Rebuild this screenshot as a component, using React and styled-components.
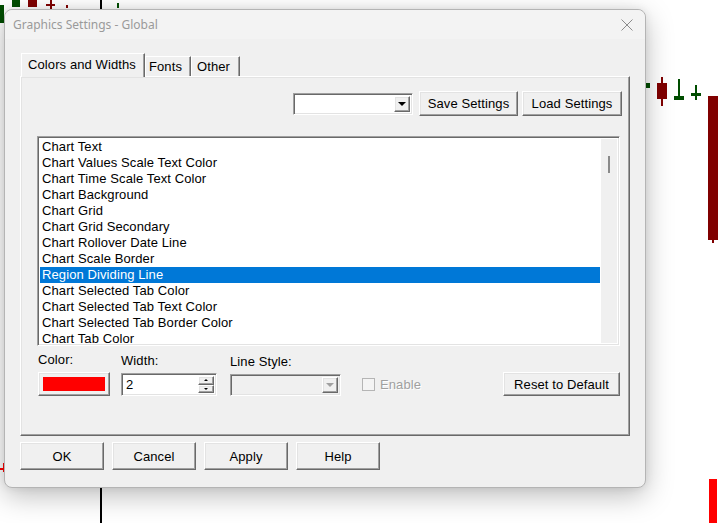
import React from "react";
import styled, { createGlobalStyle, css } from "styled-components";

const Global = createGlobalStyle`
  html, body { margin: 0; padding: 0; background: #fff; }
  body { font-family: "Liberation Sans", Arial, sans-serif; }
  * { box-sizing: border-box; }
`;

const raised = css`
  border: 1px solid;
  border-color: #ffffff #696969 #696969 #ffffff;
  box-shadow: inset -1px -1px 0 #a0a0a0, inset 1px 1px 0 #e3e3e3;
`;

const sunken = css`
  border: 1px solid;
  border-color: #a0a0a0 #ffffff #ffffff #a0a0a0;
  box-shadow: inset 1px 1px 0 #696969, inset -1px -1px 0 #e3e3e3;
`;

const Desktop = styled.div`
  position: relative;
  width: 723px;
  height: 523px;
  overflow: hidden;
  background: #ffffff;
`;

const Mark = styled.div`
  position: absolute;
  background: ${(p) => p.$c};
`;

const Window = styled.div`
  position: absolute;
  left: 4px;
  top: 9px;
  width: 642px;
  height: 479px;
  background: #f0f0f0;
  border: 1px solid #b4b4b4;
  border-radius: 8px;
  box-shadow: 0 8px 28px rgba(0, 0, 0, 0.26), 0 0 8px rgba(0, 0, 0, 0.08);
  display: flex;
  flex-direction: column;
  font-family: "Liberation Sans", Arial, sans-serif;
  font-size: 13px;
  letter-spacing: 0.1px;
  color: #000;
`;

const TitleBar = styled.div`
  height: 29px;
  display: flex;
  align-items: center;
  justify-content: space-between;
  padding: 0 12px 0 8px;
  background: #f3f3f3;
  border-radius: 8px 8px 0 0;
`;

const Title = styled.span`
  font-family: "Noto Sans", "Open Sans", sans-serif;
  font-size: 12px;
  letter-spacing: 0;
  color: #9a9a9a;
`;

const Body = styled.div`
  padding: 14px 0 0 15px;
  display: flex;
  flex-direction: column;
`;

const TabStrip = styled.div`
  display: flex;
  align-items: flex-end;
  height: 23px;
  padding-left: 1px;
  position: relative;
  z-index: 1;
`;

const Tab = styled.div`
  height: ${(p) => (p.$active ? "24px" : "20px")};
  width: ${(p) => p.$w}px;
  margin-bottom: ${(p) => (p.$active ? "-1px" : "0")};
  padding-left: ${(p) => p.$pl}px;
  padding-top: ${(p) => (p.$active ? "3px" : "2px")};
  background: #f0f0f0;
  border: 1px solid;
  border-bottom: none;
  border-color: #ffffff #696969 transparent #ffffff;
  box-shadow: inset -1px 0 0 #a0a0a0;
  line-height: 16px;
  white-space: nowrap;
`;

const Panel = styled.div`
  width: 610px;
  height: 360px;
  ${raised};
  display: flex;
  flex-direction: column;
  padding: 14px 7px 0 16px;
`;

const TopRow = styled.div`
  display: flex;
  justify-content: flex-end;
  align-items: center;
  height: 25px;
`;

const Combo = styled.div`
  width: ${(p) => p.$w}px;
  height: 22px;
  ${sunken};
  background: ${(p) => (p.$disabled ? "#f0f0f0" : "#ffffff")};
  display: flex;
  justify-content: flex-end;
  align-items: stretch;
  padding: 2px;
  margin-right: ${(p) => p.$mr || 0}px;
`;

const ComboButton = styled.div`
  width: 16px;
  ${raised};
  background: #f0f0f0;
  display: flex;
  align-items: center;
  justify-content: center;
`;

const Arrow = styled.div`
  width: 0;
  height: 0;
  border-left: ${(p) => p.$s}px solid transparent;
  border-right: ${(p) => p.$s}px solid transparent;
  ${(p) =>
    p.$up
      ? `border-bottom: ${p.$s}px solid ${p.$c};`
      : `border-top: ${p.$s}px solid ${p.$c};`}
`;

const Button = styled.button`
  ${raised};
  background: #f0f0f0;
  width: ${(p) => p.$w}px;
  height: ${(p) => p.$h || 25}px;
  margin-left: ${(p) => p.$ml || 0}px;
  padding: 0;
  font: inherit;
  color: #000;
  letter-spacing: 0.1px;
  line-height: 1;
`;

const ListBox = styled.div`
  margin-top: 20px;
  width: 583px;
  height: 210px;
  ${sunken};
  padding: 2px;
  background: #fff;
  display: flex;
`;

const Rows = styled.div`
  flex: 1;
  overflow: hidden;
  margin-right: 1px;
`;

const Row = styled.div`
  height: 16px;
  line-height: 16px;
  padding-left: 2px;
  white-space: nowrap;
  background: ${(p) => (p.$sel ? "#0078d7" : "transparent")};
  color: ${(p) => (p.$sel ? "#ffffff" : "#000")};
`;

const ScrollTrack = styled.div`
  width: 16px;
  background: #f0f0f0;
  padding: 17px 0 0 7px;
`;

const Thumb = styled.div`
  width: 2px;
  height: 17px;
  background: #8a8a8a;
`;

const Controls = styled.div`
  display: flex;
  align-items: flex-end;
  margin-top: 7px;
  width: 583px;
`;

const Field = styled.div`
  display: flex;
  flex-direction: column;
  gap: 5px;
  margin-left: ${(p) => p.$ml || 0}px;
`;

const Label = styled.div`
  height: 14px;
  line-height: 14px;
`;

const ColorSwatchButton = styled.div`
  width: 72px;
  height: 24px;
  ${raised};
  background: #f0f0f0;
  padding: 4px;
`;

const Swatch = styled.div`
  width: 100%;
  height: 100%;
  background: ${(p) => p.$c};
`;

const Spinner = styled.div`
  width: 96px;
  height: 23px;
  ${sunken};
  background: #fff;
  display: flex;
  padding: 2px;
`;

const SpinText = styled.div`
  flex: 1;
  padding-left: 2px;
  line-height: 17px;
`;

const SpinButtons = styled.div`
  width: 16px;
  display: flex;
  flex-direction: column;
`;

const SpinBtn = styled.div`
  flex: 1;
  ${raised};
  background: #f0f0f0;
  display: flex;
  align-items: center;
  justify-content: center;
`;

const Check = styled.label`
  display: flex;
  align-items: center;
  gap: 5px;
  margin-left: 21px;
  height: 23px;
  color: #a0a0a0;
  text-shadow: 1px 1px 0 #ffffff;
`;

const Box = styled.span`
  width: 13px;
  height: 13px;
  border: 1px solid #b5b5b5;
  background: #f4f4f4;
`;

const Spacer = styled.div`
  flex: 1;
`;

const Footer = styled.div`
  display: flex;
  gap: 8px;
  margin-top: 6px;
`;

const items = [
  "Chart Text",
  "Chart Values Scale Text Color",
  "Chart Time Scale Text Color",
  "Chart Background",
  "Chart Grid",
  "Chart Grid Secondary",
  "Chart Rollover Date Line",
  "Chart Scale Border",
  "Region Dividing Line",
  "Chart Selected Tab Color",
  "Chart Selected Tab Text Color",
  "Chart Selected Tab Border Color",
  "Chart Tab Color",
];

const G = "#004d00";
const R = "#800000";
const marks = [
  [0, 5, 4, 18, G],
  [12, 0, 8, 7, G],
  [28, 0, 9, 7, R],
  [50, 0, 2, 9, R],
  [46, 4, 9, 2, R],
  [66, 5, 2, 3, R],
  [100, 0, 2, 523, "#000"],
  [117, 3, 2, 5, G],
  [646, 83, 4, 5, G],
  [661, 77, 2, 29, R],
  [657, 83, 10, 16, R],
  [678, 79, 2, 19, G],
  [674, 96, 10, 4, G],
  [695, 85, 2, 15, G],
  [691, 93, 10, 3, G],
  [708, 96, 10, 144, R],
  [712, 240, 2, 3, R],
  [709, 479, 8, 44, "#ff0000"],
  [0, 468, 4, 2, "#ff0000"],
  [3, 463, 2, 9, "#ff0000"],
];

export default function App() {
  return (
    <Desktop>
      <Global />
      {marks.map(([x, y, w, h, c], i) => (
        <Mark key={i} $c={c} style={{ left: x, top: y, width: w, height: h }} />
      ))}
      <Window>
        <TitleBar>
          <Title>Graphics Settings - Global</Title>
          <svg width="12" height="12" viewBox="0 0 12 12">
            <path d="M0.5 0.5 L11.5 11.5 M11.5 0.5 L0.5 11.5" stroke="#8c8c8c" strokeWidth="1" />
          </svg>
        </TitleBar>
        <Body>
          <TabStrip>
            <Tab $active $w={124} $pl={6}>Colors and Widths</Tab>
            <Tab $w={46} $pl={3}>Fonts</Tab>
            <Tab $w={49} $pl={5}>Other</Tab>
          </TabStrip>
          <Panel>
            <TopRow>
              <Combo $w={120} $mr={6}>
                <ComboButton>
                  <Arrow $s={4} $c="#000" />
                </ComboButton>
              </Combo>
              <Button $w={99}>Save Settings</Button>
              <Button $w={100} $ml={4}>Load Settings</Button>
            </TopRow>
            <ListBox>
              <Rows>
                {items.map((t) => (
                  <Row key={t} $sel={t === "Region Dividing Line"}>{t}</Row>
                ))}
              </Rows>
              <ScrollTrack>
                <Thumb />
              </ScrollTrack>
            </ListBox>
            <Controls>
              <Field $ml={1}>
                <Label>Color:</Label>
                <ColorSwatchButton>
                  <Swatch $c="#ff0000" />
                </ColorSwatchButton>
              </Field>
              <Field $ml={11}>
                <Label>Width:</Label>
                <Spinner>
                  <SpinText>2</SpinText>
                  <SpinButtons>
                    <SpinBtn>
                      <Arrow $up $s={2} $c="#000" />
                    </SpinBtn>
                    <SpinBtn>
                      <Arrow $s={2} $c="#000" />
                    </SpinBtn>
                  </SpinButtons>
                </Spinner>
              </Field>
              <Field $ml={13}>
                <Label>Line Style:</Label>
                <Combo $w={111} $disabled>
                  <ComboButton>
                    <Arrow $s={4} $c="#a0a0a0" />
                  </ComboButton>
                </Combo>
              </Field>
              <Check>
                <Box />
                Enable
              </Check>
              <Spacer />
              <Button $w={117} $h={24}>Reset to Default</Button>
            </Controls>
          </Panel>
          <Footer>
            <Button $w={84} $h={28}>OK</Button>
            <Button $w={84} $h={28}>Cancel</Button>
            <Button $w={84} $h={28}>Apply</Button>
            <Button $w={84} $h={28}>Help</Button>
          </Footer>
        </Body>
      </Window>
    </Desktop>
  );
}
